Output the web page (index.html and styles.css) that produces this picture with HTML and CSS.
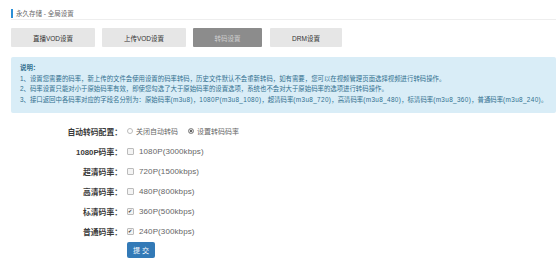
FILE: index.html
```html
<!DOCTYPE html>
<html lang="zh-CN">
<head>
  <meta charset="UTF-8">
  <title>全局设置</title>
  <link rel="stylesheet" href="styles.css">
</head>
<body>
  <div class="page">
    <div class="title"><span class="title-text">永久存储 - 全局设置</span></div>

    <div class="tabs">
      <a class="tab" href="#">直播VOD设置</a>
      <a class="tab" href="#">上传VOD设置</a>
      <a class="tab tab-narrow active" href="#">转码设置</a>
      <a class="tab tab-drm" href="#">DRM设置</a>
    </div>

    <div class="info">
      <div class="info-head">说明：</div>
      <div>1、设置您需要的码率，新上传的文件会使用设置的码率转码，历史文件默认不会重新转码，如有需要，您可以在视频管理页面选择视频进行转码操作。</div>
      <div>2、码率设置只能对小于原始码率有效，即使您勾选了大于原始码率的设置选项，系统也不会对大于原始码率的选项进行转码操作。</div>
      <div>3、接口返回中各码率对应的字段名分别为：原始码率<span class="en">(m3u8)</span>，<span class="en">1080P(m3u8_1080)</span>，超清码率<span class="en">(m3u8_720)</span>，高清码率<span class="en">(m3u8_480)</span>，标清码率<span class="en">(m3u8_360)</span>，普通码率<span class="en">(m3u8_240)</span>。</div>
    </div>

    <form class="form">
      <div class="row">
        <label class="label">自动转码配置：</label>
        <div class="control">
          <span class="opt"><span class="radio"></span>关闭自动转码</span>
          <span class="opt"><span class="radio on"></span>设置转码码率</span>
        </div>
      </div>
      <div class="row">
        <label class="label">1080P码率：</label>
        <div class="control"><span class="opt opt-en"><span class="check"></span>1080P(3000kbps)</span></div>
      </div>
      <div class="row">
        <label class="label">超清码率：</label>
        <div class="control"><span class="opt opt-en"><span class="check"></span>720P(1500kbps)</span></div>
      </div>
      <div class="row">
        <label class="label">高清码率：</label>
        <div class="control"><span class="opt opt-en"><span class="check"></span>480P(800kbps)</span></div>
      </div>
      <div class="row">
        <label class="label">标清码率：</label>
        <div class="control"><span class="opt opt-en"><span class="check on">✔</span>360P(500kbps)</span></div>
      </div>
      <div class="row">
        <label class="label">普通码率：</label>
        <div class="control"><span class="opt opt-en"><span class="check on">✔</span>240P(300kbps)</span></div>
      </div>
      <div class="row row-btn">
        <span class="label"></span>
        <div class="control"><button type="button" class="btn">提 交</button></div>
      </div>
    </form>
  </div>
</body>
</html>
```

FILE: styles.css
```css
body {
  margin: 0;
  background-color: #fff;
  font-family: 'Liberation Sans', 'Noto Sans CJK SC', sans-serif;
  font-size: 6.5px;
  color: #555;
}
.page {
  padding: 9px 2px 0 11px;
}
.title {
  border-bottom: 1px solid #eee;
  padding-bottom: 1px;
}
.title-text {
  display: inline-block;
  border-left: 2px solid #2c8fd6;
  padding-left: 3px;
  line-height: 9px;
  color: #666;
}
.tabs {
  display: flex;
  gap: 7px;
  margin-top: 8px;
}
.tab {
  display: flex;
  align-items: center;
  justify-content: center;
  width: 84px;
  height: 19px;
  background-color: #e6e6e6;
  color: #333;
  text-decoration: none;
  border-radius: 1px;
}
.tab-narrow {
  width: 69px;
}
.tab-drm {
  width: 72px;
  margin-left: 1px;
}
.tab.active {
  background-color: #8c8c8c;
  color: #d0d0d0;
}
.info {
  margin-top: 10px;
  background-color: #d9edf7;
  color: #31708f;
  padding: 6px 9px 8px;
  font-size: 6.4px;
  line-height: 10.5px;
  border-radius: 2px;
  white-space: nowrap;
}
.info .en {
  letter-spacing: 0.35px;
}
.info-head {
  font-weight: bold;
}
.form {
  margin-top: 8px;
}
.row {
  display: flex;
  align-items: center;
  height: 20px;
}
.label {
  width: 111px;
  text-align: right;
  font-weight: bold;
  color: #3a3a3a;
  font-size: 7.8px;
}
.control {
  display: flex;
  gap: 10px;
  margin-left: 5px;
  color: #666;
  font-size: 7px;
}
.opt {
  display: flex;
  align-items: center;
}
.opt-en {
  font-size: 8px;
  letter-spacing: 0.1px;
}
.radio {
  display: inline-block;
  width: 4px;
  height: 4px;
  border: 1px solid #bbb;
  border-radius: 50%;
  margin-right: 3px;
  background: #fff;
}
.radio.on {
  background: #333;
  box-shadow: inset 0 0 0 1px #fff;
  border-color: #999;
}
.check {
  display: inline-flex;
  align-items: center;
  justify-content: center;
  width: 5px;
  height: 5px;
  border: 1px solid #bbb;
  border-radius: 1px;
  background: #f4f4f4;
  margin-right: 5px;
  font-size: 5px;
  line-height: 1;
  color: #333;
}
.row-btn {
  height: 22px;
  align-items: flex-start;
  padding-top: 1px;
}
.btn {
  width: 28px;
  height: 16px;
  border: none;
  border-radius: 2px;
  background-color: #337ab7;
  color: #fff;
  font-family: inherit;
  font-size: 7px;
  padding: 0;
  cursor: pointer;
}
```
